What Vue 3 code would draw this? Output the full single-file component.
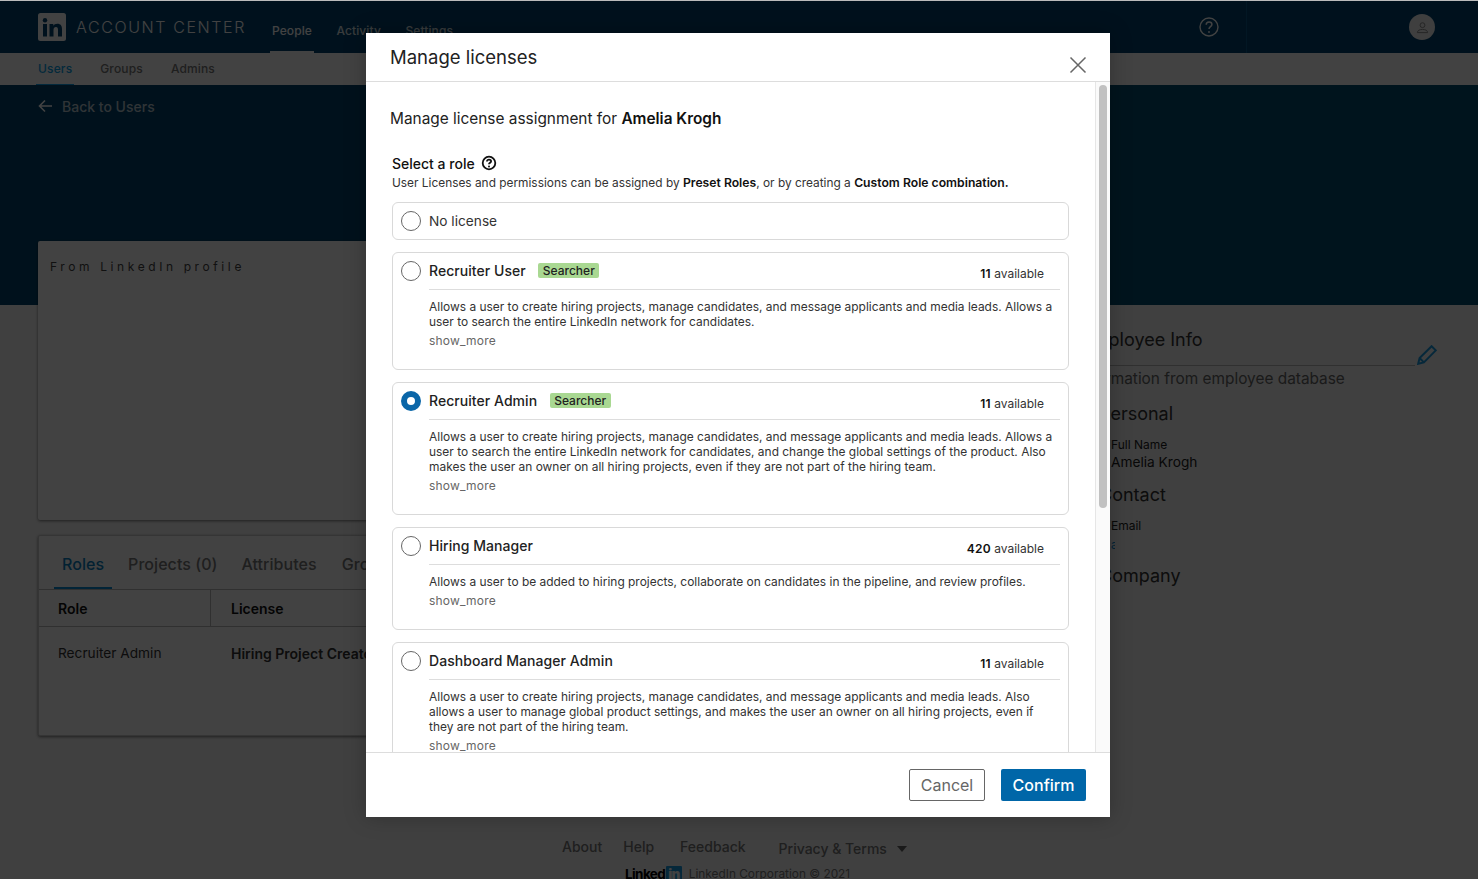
<script setup>
const roles = [
  { name: 'Recruiter User', badge: 'Searcher', count: 11, desc: 'Allows a user to create hiring projects, manage candidates, and message applicants and media leads. Allows a user to search the entire LinkedIn network for candidates.', h: 118 },
  { name: 'Recruiter Admin', badge: 'Searcher', count: 11, selected: true, desc: 'Allows a user to create hiring projects, manage candidates, and message applicants and media leads. Allows a user to search the entire LinkedIn network for candidates, and change the global settings of the product. Also makes the user an owner on all hiring projects, even if they are not part of the hiring team.', h: 133 },
  { name: 'Hiring Manager', count: 420, desc: 'Allows a user to be added to hiring projects, collaborate on candidates in the pipeline, and review profiles.', h: 103 },
  { name: 'Dashboard Manager Admin', count: 11, desc: 'Allows a user to create hiring projects, manage candidates, and message applicants and media leads. Also allows a user to manage global product settings, and makes the user an owner on all hiring projects, even if they are not part of the hiring team.', h: 133 }
]
</script>

<template>
  <div class="page">
    <header class="topbar">
      <div class="brand">
        <svg class="logo" viewBox="0 0 28 28" width="28" height="28">
          <rect width="28" height="28" rx="2.5" fill="#fff" />
          <circle cx="7" cy="7.2" r="2.2" fill="#00446f" />
          <rect x="5" y="11" width="4" height="12.5" fill="#00446f" />
          <path d="M11.5 11h3.8v1.8c.7-1.2 2.2-2.1 4-2.1 3.4 0 4.7 2.1 4.7 5.5v7.3h-4v-6.6c0-1.7-.5-2.9-2-2.9-1.6 0-2.5 1.2-2.5 2.9v6.6h-4z" fill="#00446f" />
        </svg>
        <span class="brand-name">ACCOUNT CENTER</span>
      </div>
      <nav class="mainnav">
        <a class="mainlink current">People</a>
        <a class="mainlink">Activity</a>
        <a class="mainlink">Settings</a>
      </nav>
      <div class="top-help">
        <svg viewBox="0 0 20 20" width="20" height="20" fill="none" stroke="#fff" stroke-width="1.4">
          <circle cx="10" cy="10" r="9" />
          <path d="M7.2 7.8c0-1.7 1.3-2.8 2.9-2.8s2.8 1 2.8 2.4c0 2.3-2.9 2.3-2.9 4.6" stroke-width="1.5" />
          <circle cx="10" cy="15" r=".9" fill="#fff" stroke="none" />
        </svg>
      </div>
      <div class="top-user">
        <span class="avatar">
          <svg viewBox="0 0 14 14" width="13" height="13" fill="none" stroke="#8a8a8a" stroke-width="1">
            <circle cx="7" cy="4.5" r="2.6" />
            <path d="M1.5 12.5c0-2.4 2.4-3.4 5.5-3.4s5.5 1 5.5 3.4z" />
          </svg>
        </span>
      </div>
    </header>

    <nav class="subnav">
      <a class="sublink current">Users</a>
      <a class="sublink">Groups</a>
      <a class="sublink">Admins</a>
    </nav>

    <section class="hero">
      <a class="back">
        <svg viewBox="0 0 14 14" width="14" height="14" fill="none" stroke="#fff" stroke-width="1.6">
          <path d="M14 7H1.5M7 1.5 1.5 7 7 12.5" />
        </svg>
        Back to Users
      </a>
    </section>

    <main class="content">
      <div class="left-col">
        <section class="profile-card">From LinkedIn profile</section>
        <section class="tabs-card">
          <div class="tabs">
            <a class="tab current">Roles</a>
            <a class="tab">Projects (0)</a>
            <a class="tab">Attributes</a>
            <a class="tab last">Groups</a>
          </div>
          <div class="thead">
            <span class="cell-role">Role</span>
            <span class="cell-license">License</span>
          </div>
          <div class="trow">
            <span class="cell-role plain">Recruiter Admin</span>
            <span class="cell-license">Hiring Project Creator</span>
          </div>
        </section>
      </div>
      <aside class="right-col">
        <div class="info-head">
          <h2>Employee Info</h2>
          <svg class="pencil" viewBox="0 0 20 20" width="20" height="20" fill="none" stroke="#1a9be0" stroke-width="2">
            <path d="M1.2 18.8 2.6 13 14.6 1.2l4.2 4.2L6.9 17.4z" />
            <path d="M2.6 13l4.3 4.4" />
          </svg>
        </div>
        <p class="info-sub">Information from employee database</p>
        <h3>Personal</h3>
        <div class="field">
          <label>Full Name</label>
          <span>Amelia Krogh</span>
        </div>
        <h3>Contact</h3>
        <div class="field">
          <label>Email</label>
          <span class="link">a</span>
        </div>
        <h3>Company</h3>
      </aside>
    </main>

    <footer class="pagefoot">
      <div class="foot-links">
        <a>About</a>
        <a>Help</a>
        <a class="feedback">Feedback</a>
        <a class="privacy">Privacy &amp; Terms <i class="caret"></i></a>
      </div>
      <div class="foot-copy">
        <span class="foot-logo">Linked<b>in</b></span>
        <span>LinkedIn Corporation © 2021</span>
      </div>
    </footer>

    <div class="overlay"></div>

    <div class="modal">
      <div class="modal-head">
        <h1>Manage licenses</h1>
        <svg class="close" viewBox="0 0 18 18" width="18" height="18" fill="none" stroke="#666" stroke-width="1.5">
          <path d="M1.5 1.5l15 15M16.5 1.5l-15 15" />
        </svg>
      </div>
      <div class="modal-body">
        <div class="scroll-area">
          <p class="assign">Manage license assignment for <strong>Amelia Krogh</strong></p>
          <div class="select-title">
            Select a role
            <svg viewBox="0 0 16 16" width="16" height="16" fill="none" stroke="#111" stroke-width="1.8">
              <circle cx="8" cy="8" r="6.3" />
              <path d="M5.9 6.5c0-1.2.9-1.9 2.1-1.9s2.1.7 2.1 1.7c0 1.5-2.1 1.5-2.1 3" />
              <circle cx="8" cy="11.4" r="1" fill="#111" stroke="none" />
            </svg>
          </div>
          <p class="select-sub">User Licenses and permissions can be assigned by <strong>Preset Roles</strong>, or by creating a <strong>Custom Role combination.</strong></p>
          <div class="role-list">
            <div class="role none">
              <span class="radio"></span>
              <span class="none-label">No license</span>
            </div>
            <div v-for="r in roles" :key="r.name" class="role" :style="{ height: r.h + 'px' }">
              <span class="radio" :class="{ on: r.selected }"></span>
              <div class="role-main">
                <div class="role-top">
                  <span class="role-name">{{ r.name }}</span>
                  <span v-if="r.badge" class="badge">{{ r.badge }}</span>
                  <span class="avail"><b>{{ r.count }}</b> available</span>
                </div>
                <p class="role-desc">{{ r.desc }}</p>
                <a class="more">show_more</a>
              </div>
            </div>
          </div>
        </div>
        <div class="track"><span class="thumb"></span></div>
      </div>
      <div class="modal-foot">
        <button class="btn ghost">Cancel</button>
        <button class="btn primary">Confirm</button>
      </div>
    </div>
  </div>
</template>

<style>
html, body { margin: 0; height: 100%; overflow: hidden; }
</style>

<style scoped>
.page {
  position: relative;
  width: 1478px;
  height: 879px;
  overflow: hidden;
  background: #f6f6f6;
  font-family: Inter, "Noto Sans", sans-serif;
  color: #222;
  border-top: 1px solid #bbb;
  box-sizing: border-box;
}
p, h1, h2, h3 { margin: 0; font-weight: 400; }

.topbar {
  display: flex;
  height: 52px;
  background: #00446f;
  color: #fff;
}
.brand { display: flex; align-items: center; gap: 10px; margin-left: 38px; width: 234px; }
.brand-name { font-size: 16px; letter-spacing: 1.6px; font-weight: 300; }
.mainnav { display: flex; gap: 20.5px; }
.mainlink { font-size: 12px; font-weight: 500; padding: 21.5px 2px 0; margin-left: -2px; margin-right: 2px; opacity: .85; letter-spacing: .1px; }
.mainlink.current { border-bottom: 2px solid #fff; height: 28.5px; opacity: 1; }
.top-help { margin-left: auto; width: 70px; display: flex; align-items: center; justify-content: center; margin-right: 1px; }
.top-help svg { position: relative; left: -1px; }
.top-user { width: 232px; border-left: 1px solid #0a5a8c; display: flex; align-items: center; justify-content: flex-end; padding-right: 43px; box-sizing: border-box; }
.avatar { width: 26px; height: 26px; border-radius: 50%; background: #f1f1f1; display: flex; align-items: center; justify-content: center; }

.subnav {
  display: flex;
  gap: 28px;
  height: 32px;
  padding-left: 38px;
  background: #fff;
  box-sizing: border-box;
}
.sublink { font-size: 12px; font-weight: 500; line-height: 31px; color: #777; position: relative; letter-spacing: .15px; }
.sublink.current { color: #0c9fe6; }
.sublink.current::after { content: ""; position: absolute; left: -2px; right: -2px; bottom: 0; height: 1px; background: #0c9fe6; }

.hero {
  height: 220px;
  background: linear-gradient(107deg, #00446c 0 50%, #004e70 50% 100%);
  padding: 13px 0 0 38px;
  box-sizing: border-box;
}
.back { display: flex; align-items: center; gap: 10px; font-size: 14px; font-weight: 500; color: #b9c8d2; height: 16px; }

.content {
  display: grid;
  grid-template-columns: 1010px 1fr;
  gap: 27px;
  margin-top: -64px;
  padding-left: 38px;
}
.left-col { display: flex; flex-direction: column; gap: 15px; }
.profile-card {
  height: 279px;
  background: #fff;
  border-radius: 2px;
  box-shadow: 0 1px 3px rgba(0,0,0,.5);
  padding: 18px 12px;
  box-sizing: border-box;
  font-size: 12px;
  letter-spacing: 3.6px;
  color: #444;
}
.tabs-card {
  height: 201px;
  background: #fff;
  border: 1px solid #ccc;
  border-radius: 2px;
  box-shadow: 0 1px 3px rgba(0,0,0,.5);
  box-sizing: border-box;
}
.tabs { display: flex; gap: 8px; height: 54px; padding-left: 15px; border-bottom: 1px solid #bbb; box-sizing: border-box; }
.tab { font-size: 16px; font-weight: 500; color: #777; padding: 18px 8px 0; height: 53px; box-sizing: border-box; letter-spacing: .05px; }
.tab.current { color: #0b7fc0; border-bottom: 2px solid #0a8ad4; }
.tab.last { margin-left: 1px; }
.thead { display: flex; height: 37px; align-items: center; border-bottom: 1px solid #bbb; font-size: 14px; font-weight: 600; color: #111; box-sizing: border-box; }
.trow { display: flex; height: 52px; align-items: center; font-size: 14px; font-weight: 600; color: #333; }
.cell-role { width: 172px; padding-left: 19px; height: 100%; box-sizing: border-box; display: flex; align-items: center; border-right: 1px solid #bbb; }
.trow .cell-role { border-right: 0; }
.trow .cell-role.plain { font-weight: 400; font-size: 13.7px; }
.cell-license { padding-left: 20px; white-space: nowrap; }

.right-col { padding-top: 88px; position: relative; color: #222; }
.info-head { display: flex; height: 36px; margin-right: 63px; margin-left: 8px; border-bottom: 1px solid #bbb; position: relative; }
.info-head h2 { font-size: 18px; color: #333; line-height: 22px; position: relative; left: -1px; }
.pencil { position: absolute; right: -22px; top: 16px; }
.info-sub { font-size: 15.4px; color: #666; margin: 3px 0 0 2px; line-height: 20px; }
.right-col h3 { font-size: 18px; color: #333; margin-left: 24px; line-height: 22px; }
.info-sub + h3 { margin-top: 14px; }
.field { margin: 12px 0 0 36px; display: flex; flex-direction: column; font-size: 13.7px; height: 47px; color: #222; }
.field label { font-size: 12px; line-height: 16px; }
.field span { line-height: 19px; }
.field span.link { color: #0a8ad4; font-size: 12px; width: 4px; overflow: hidden; margin-top: 1px; }

.pagefoot { position: absolute; left: 562px; top: 837px; color: #777; }
.foot-links { display: flex; gap: 21px; font-size: 14px; font-weight: 500; align-items: flex-start; line-height: 17px; }
.foot-links .feedback { margin-left: 5px; }
.foot-links .privacy { margin-left: 12px; position: relative; top: 2px; display: flex; align-items: center; gap: 10px; }
.caret { width: 0; height: 0; border: 5.5px solid transparent; border-top: 6px solid #666; border-bottom: 0; }
.foot-copy { display: flex; gap: 7px; margin: 12px 0 0 63px; font-size: 11.85px; align-items: center; line-height: 14px; }
.foot-logo { font-size: 13.5px; font-weight: 700; color: #000; letter-spacing: -.6px; }
.foot-logo b { background: #1a9be0; color: #fff; padding: 0 2px; margin-left: 1px; border-radius: 1px; }

.overlay { position: absolute; inset: -1px 0 0 0; background: rgba(0,0,0,.74); }

.modal {
  position: absolute;
  left: 366px;
  top: 32px;
  width: 744px;
  height: 784px;
  background: #fff;
  box-shadow: 0 0 20px rgba(0,0,0,.25);
  display: flex;
  flex-direction: column;
  color: #222;
}
.modal-head { height: 49px; border-bottom: 1px solid #ddd; flex: none; position: relative; padding-left: 24px; box-sizing: border-box; }
.modal-head h1 { font-size: 18.5px; line-height: 48px; color: #222; }
.close { position: absolute; left: 703px; top: 23px; }
.modal-body { flex: 1; display: flex; min-height: 0; }
.scroll-area { flex: 1; overflow: hidden; padding: 27px 26px 0 24px; min-width: 0; }
.track { width: 14px; border-left: 1px solid #e6e6e6; background: #fafafa; flex: none; position: relative; }
.thumb { position: absolute; left: 3px; top: 3px; width: 8px; height: 423px; border-radius: 4px; background: #c1c1c1; }
.assign { font-size: 15.4px; line-height: 20px; }
.assign strong { font-weight: 600; color: #111; }
.select-title { display: flex; align-items: center; gap: 6px; font-size: 14px; font-weight: 500; margin: 26px 0 0 2px; line-height: 18px; color: #111; }
.select-title svg { position: relative; top: -1px; }
.select-sub { font-size: 11.88px; line-height: 15px; margin: 2px 0 12px 2px; color: #333; white-space: nowrap; }
.select-sub strong { font-weight: 600; color: #111; font-size: 12.2px; }
.role-list { display: flex; flex-direction: column; gap: 12px; margin-left: 2px; }
.role { display: flex; gap: 8px; border: 1px solid #d9d9d9; border-radius: 6px; padding: 8px 8px 0 8px; box-sizing: border-box; flex: none; }
.role.none { height: 38px; align-items: flex-start; }
.none-label { font-size: 13.7px; line-height: 20px; color: #333; }
.radio { width: 20px; height: 20px; border-radius: 50%; border: 1px solid #666; box-sizing: border-box; flex: none; background: #fff; }
.radio.on { border: 6.5px solid #0a66a8; }
.role-main { flex: 1; min-width: 0; }
.role-top { display: flex; align-items: center; height: 30px; border-bottom: 1px solid #ddd; margin-top: -1px; margin-bottom: 9px; padding-bottom: 9px; box-sizing: border-box; }
.role-name { font-size: 14px; font-weight: 500; color: #222; letter-spacing: .05px; }
.badge { margin-left: 12.5px; background: #a9d892; font-size: 12px; font-weight: 500; line-height: 15px; padding: 0 4.5px; border-radius: 2px; color: #222; }
.avail { margin-left: auto; margin-right: 16px; font-size: 12px; color: #333; position: relative; top: 3px; }
.avail b { font-weight: 600; color: #111; letter-spacing: .2px; }
.role-desc { font-size: 11.95px; line-height: 15px; color: #333; }
.more { display: block; font-size: 12px; color: #666; line-height: 15px; margin-top: 4px; letter-spacing: .2px; }

.modal-foot { height: 65px; border-top: 1px solid #ddd; flex: none; box-sizing: border-box; display: flex; align-items: center; justify-content: flex-end; gap: 16px; padding-right: 24px; }
.btn { height: 32px; font-family: inherit; font-size: 16px; border-radius: 2px; padding: 0; cursor: pointer; }
.btn.ghost { width: 76px; background: #fff; border: 1px solid #666; color: #666; }
.btn.primary { width: 85px; background: #0066a8; border: 0; color: #fff; font-weight: 500; }
</style>
